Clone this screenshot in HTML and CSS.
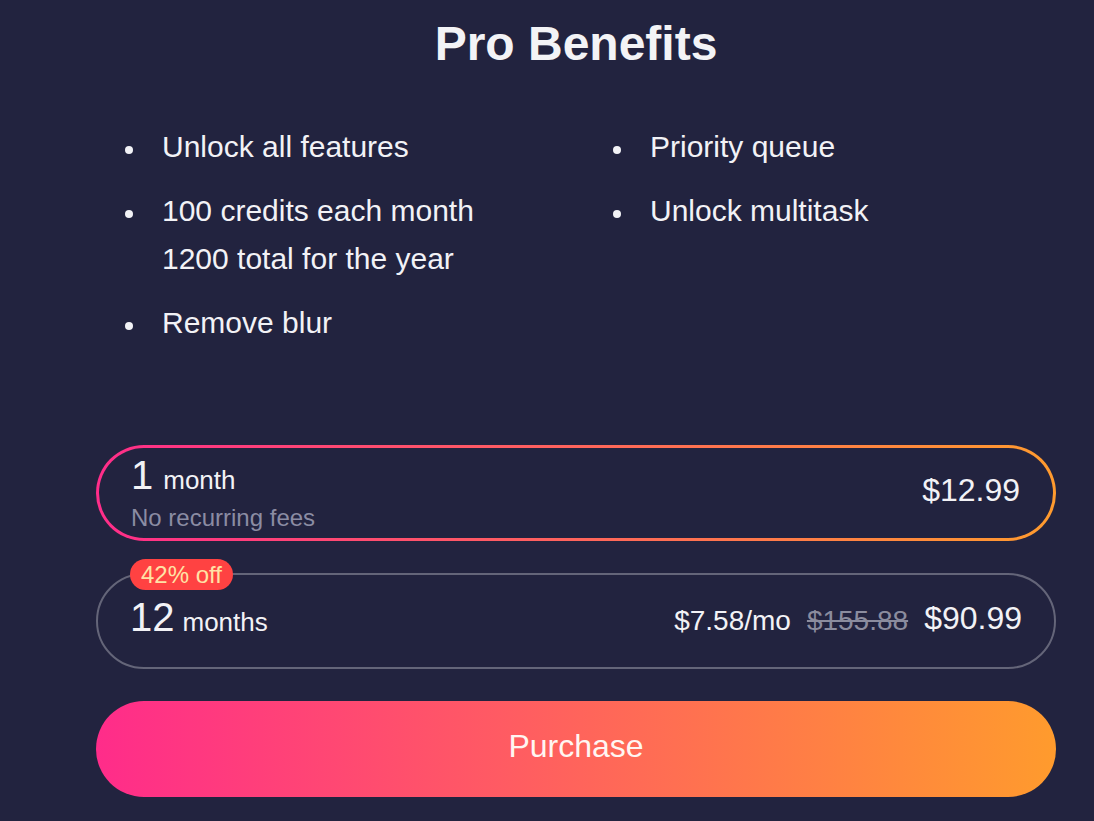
FILE: index.html
```html
<!DOCTYPE html>
<html lang="en">
<head>
  <meta charset="UTF-8">
  <meta name="viewport" content="width=device-width, initial-scale=1.0">
  <title>Pro Benefits</title>
  <link rel="stylesheet" href="styles.css">
</head>
<body>
  <div class="paywall">
    <h1 class="paywall-title">Pro Benefits</h1>

    <div class="benefits">
      <ul class="benefit-list">
        <li class="benefit">Unlock all features</li>
        <li class="benefit">100 credits each month<br>1200 total for the year</li>
        <li class="benefit">Remove blur</li>
      </ul>
      <ul class="benefit-list">
        <li class="benefit">Priority queue</li>
        <li class="benefit">Unlock multitask</li>
      </ul>
    </div>

    <div class="plans">
      <div class="plan selected">
        <div class="plan-info">
          <div class="plan-term"><span class="term-num">1</span><span class="term-unit">month</span></div>
          <div class="plan-note">No recurring fees</div>
        </div>
        <div class="plan-prices">
          <span class="price">$12.99</span>
        </div>
      </div>

      <div class="plan">
        <span class="discount-badge">42% off</span>
        <div class="plan-info">
          <div class="plan-term"><span class="term-num">12</span><span class="term-unit">months</span></div>
        </div>
        <div class="plan-prices">
          <span class="per-month">$7.58/mo</span>
          <span class="old-price">$155.88</span>
          <span class="price">$90.99</span>
        </div>
      </div>
    </div>

    <button class="purchase-button">Purchase</button>
  </div>
</body>
</html>
```

FILE: styles.css
```css
html, body {
  background-color: #22233f;
}

body {
  margin: 0;
  font-family: "Liberation Sans", Arial, sans-serif;
  color: #f2f2f6;
}

.paywall {
  width: 960px;
  margin-left: 96px;
  padding-top: 16px;
}

.paywall-title {
  margin: 0;
  font-size: 48px;
  line-height: 56px;
  font-weight: bold;
  text-align: center;
  color: #f3f3f6;
}

.benefits {
  display: grid;
  grid-template-columns: 488px 1fr;
  margin-top: 51px;
  padding-left: 66px;
}

.benefit-list {
  list-style: none;
  margin: 0;
  padding: 0;
}

.benefit {
  position: relative;
  font-size: 30px;
  line-height: 48px;
  margin-bottom: 16px;
}

.benefit:last-child {
  margin-bottom: 0;
}

.benefit::before {
  content: "";
  position: absolute;
  left: -37px;
  top: 23px;
  width: 8px;
  height: 8px;
  border-radius: 50%;
  background-color: #f2f2f6;
}

.plans {
  display: flex;
  flex-direction: column;
  gap: 32px;
  margin-top: 98px;
}

.plan {
  position: relative;
  display: flex;
  align-items: center;
  justify-content: space-between;
  box-sizing: border-box;
  height: 96px;
  padding: 0 32px 0 32px;
  border: 2px solid rgba(255,255,255,0.3);
  border-radius: 48px;
}

.plan.selected {
  padding: 0 33px 0 32px;
  border: 3px solid transparent;
  background:
    linear-gradient(#22233f, #22233f) padding-box,
    linear-gradient(90deg, #ff2d8a, #ff9b2e) border-box;
}

.plan-term {
  line-height: 44px;
  white-space: nowrap;
}

.selected .plan-term {
  margin-top: -2px;
}

.term-num {
  font-size: 40px;
}

.term-unit {
  margin-left: 10px;
  font-size: 26px;
}

.plan .term-num + .term-unit {
  margin-left: 8px;
}

.selected .term-num + .term-unit {
  margin-left: 10px;
}

.plan-note {
  margin-top: -2px;
  font-size: 24px;
  line-height: 28px;
  color: #8b8ca3;
}

.plan-prices {
  display: flex;
  align-items: center;
  gap: 16px;
  white-space: nowrap;
}

.price {
  margin-bottom: 6px;
  font-size: 32px;
}

.per-month {
  font-size: 28px;
}

.old-price {
  font-size: 28px;
  color: #8b8c9e;
  text-decoration: line-through;
}

.discount-badge {
  position: absolute;
  top: -16px;
  left: 32px;
  padding: 0 11px;
  font-size: 24px;
  line-height: 31px;
  border-radius: 16px;
  background-color: #ff4242;
  color: #ffe2a6;
}

.purchase-button {
  display: block;
  width: 100%;
  height: 96px;
  margin-top: 32px;
  padding: 0 0 6px;
  border: none;
  border-radius: 48px;
  background: linear-gradient(90deg, #ff2c8a, #ff9b2d);
  font-family: inherit;
  font-size: 32px;
  color: #fff6f2;
  cursor: pointer;
}
```
